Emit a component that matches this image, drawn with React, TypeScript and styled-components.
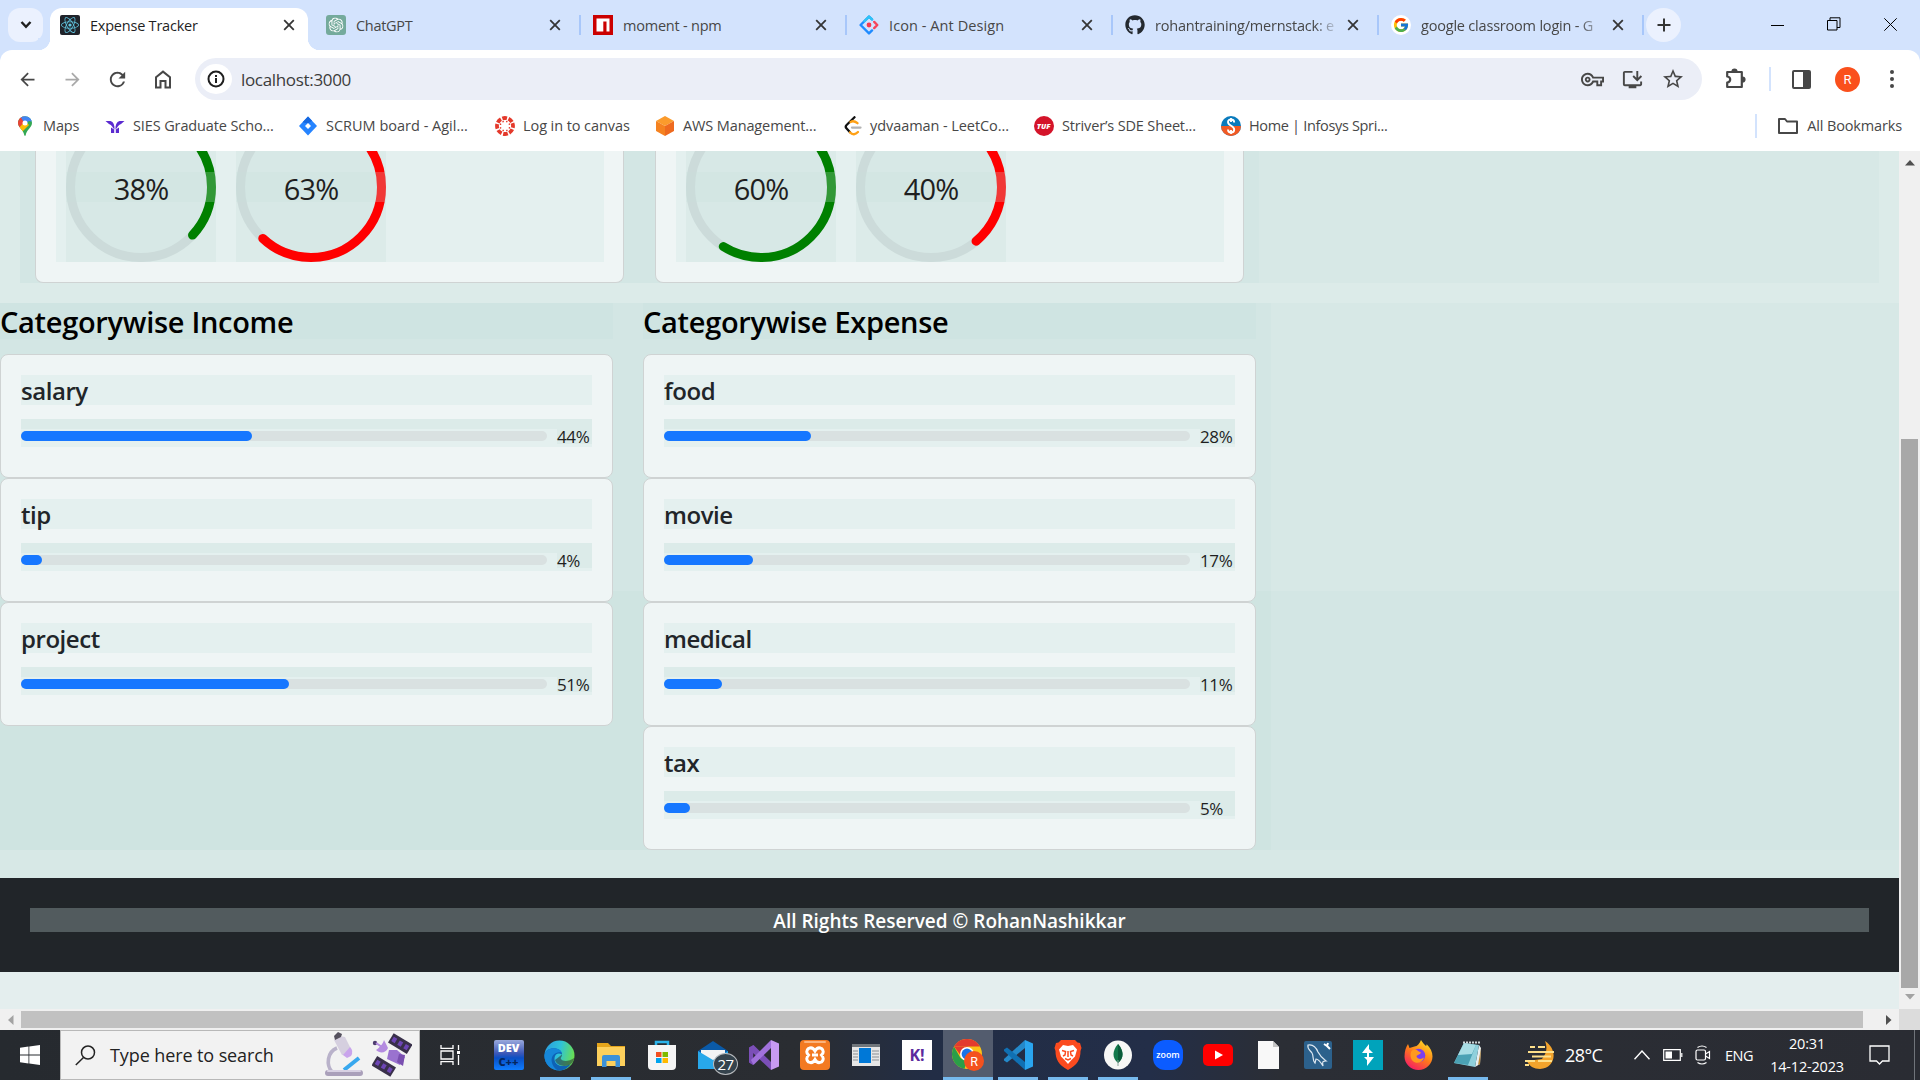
import React from 'react';
import styled, { createGlobalStyle } from 'styled-components';
import { FaGithub, FaReact, FaEdge, FaFirefoxBrowser } from 'react-icons/fa';
import { FcGoogle } from 'react-icons/fc';
import { SiOpenai } from 'react-icons/si';
import { MdOutlineVpnKey, MdInstallDesktop, MdStarBorder, MdArrowBack, MdArrowForward, MdRefresh } from 'react-icons/md';

const tint = {
  l1: '#eff5f5',
  l2: '#e4f0ef',
  l3: '#dcebe9',
  l4: '#d7e8e6',
  l5: '#d3e6e4',
  l6: '#cfe4e1',
};

const Global = createGlobalStyle`
  * { box-sizing: border-box; }
  body { margin: 0; overflow: hidden; font-family: 'Open Sans', 'Noto Sans', sans-serif; }
  svg { display: block; flex: none; }
`;

const Screen = styled.div`
  width: 1920px;
  height: 1080px;
  display: flex;
  flex-direction: column;
  overflow: hidden;
  background: #fff;
`;

/* ---------- browser chrome ---------- */

const TabStrip = styled.div`
  height: 50px;
  flex: none;
  display: flex;
  background: #d3e3fd;
  padding: 8px 0 0 8px;
`;

const RoundButton = styled.div<{ $round?: boolean }>`
  width: 35px;
  height: 34px;
  flex: none;
  border-radius: ${(p) => (p.$round ? '50%' : '12px')};
  background: #ebf1fe;
  display: flex;
  align-items: center;
  justify-content: center;
`;

const Tab = styled.div<{ $active?: boolean; $w: number; $sep?: boolean }>`
  position: relative;
  width: ${(p) => p.$w}px;
  height: 42px;
  flex: none;
  display: flex;
  align-items: center;
  padding: 0 9px 9px 10px;
  background: ${(p) => (p.$active ? '#fff' : 'transparent')};
  border-radius: 12px 12px 0 0;
  ${(p) =>
    p.$active &&
    `
    &::before, &::after {
      content: ''; position: absolute; bottom: 0; width: 12px; height: 12px;
    }
    &::before { left: -12px; background: radial-gradient(circle at 0 0, #d3e3fd 12px, #fff 12.5px); }
    &::after { right: -12px; background: radial-gradient(circle at 100% 0, #d3e3fd 12px, #fff 12.5px); }
  `}
  ${(p) =>
    p.$sep &&
    `
    &::after { content: ''; position: absolute; right: 2px; top: 7px; width: 2px; height: 20px; background: #a8c7fa; }
  `}
`;

const TabIcon = styled.div`
  width: 20px;
  height: 20px;
  margin-top: 1px;
  flex: none;
`;

const TabTitle = styled.div<{ $active?: boolean; $fade?: boolean; $ls?: number }>`
  flex: 1;
  margin: 1px 10px 0 10px;
  white-space: nowrap;
  font-size: 14.5px;
  letter-spacing: ${(p) => p.$ls ?? -0.22}px;
  color: ${(p) => (p.$active ? '#1f1f1f' : '#474747')};
  ${(p) => p.$fade && 'mask-image: linear-gradient(90deg, #000 88%, rgba(0, 0, 0, 0.15) 100%);'}
`;

const CloseSlot = styled.div<{ $wide?: boolean }>`
  flex: none;
  margin-right: ${(p) => (p.$wide ? 12 : 3)}px;
`;

const TabLead = styled.div<{ $w: number }>`
  width: ${(p) => p.$w}px;
  flex: none;
`;

const WindowControls = styled.div`
  flex: 1;
  height: 32px;
  display: flex;
  align-items: center;
  justify-content: flex-end;
  gap: 43px;
  padding-right: 23px;
`;

const Toolbar = styled.div`
  height: 58px;
  flex: none;
  background: #d3e3fd;
`;

const ToolbarInner = styled.div`
  height: 58px;
  display: flex;
  align-items: center;
  background: #fff;
  border-radius: 12px 12px 0 0;
  color: #474747;
`;

const ToolIcon = styled.div<{ $w: number; $c?: string }>`
  width: ${(p) => p.$w}px;
  flex: none;
  display: flex;
  justify-content: center;
  color: ${(p) => p.$c ?? '#474747'};
`;

const Omnibox = styled.div`
  width: 1507px;
  flex: none;
  height: 42px;
  border-radius: 21px;
  background: #ebeef7;
  display: flex;
  align-items: center;
  padding: 0 9px 0 5px;
`;

const InfoDisc = styled.div`
  width: 32px;
  height: 30px;
  border-radius: 50%;
  background: #fff;
  display: flex;
  align-items: center;
  justify-content: center;
`;

const Url = styled.div`
  flex: 1;
  margin-left: 9px;
  font-size: 17px;
  letter-spacing: -0.33px;
  color: #3c3c3c;
`;

const VRule = styled.div`
  width: 2px;
  height: 24px;
  flex: none;
  background: #d3e3fd;
`;

const Avatar = styled.div`
  width: 25px;
  height: 25px;
  border-radius: 50%;
  background: #fa501c;
  color: #fff;
  font: 13px Roboto, sans-serif;
  display: flex;
  align-items: center;
  justify-content: center;
`;

const Bookmarks = styled.div`
  height: 43px;
  flex: none;
  display: flex;
  align-items: center;
  padding: 0 18px 8px 15px;
  background: #fff;
`;

const Bookmark = styled.div<{ $w?: number }>`
  width: ${(p) => (p.$w ? `${p.$w}px` : 'auto')};
  flex: none;
  display: flex;
  align-items: center;
  gap: 8px;
  color: #474747;
`;

const BookmarkText = styled.span<{ $ls: number }>`
  font-size: 14.5px;
  line-height: 20px;
  letter-spacing: ${(p) => p.$ls}px;
  white-space: nowrap;
`;

const BookmarkEnd = styled.div`
  display: flex;
  align-items: center;
  gap: 20px;
`;

const Grow = styled.div`
  flex: 1;
`;

/* ---------- page ---------- */

const Viewport = styled.div`
  height: 858px;
  flex: none;
  display: flex;
`;

const Page = styled.div`
  width: 1899px;
  height: 858px;
  overflow: hidden;
  display: flex;
  flex-direction: column;
  background: ${tint.l3};
  color: #212529;
`;

const SummaryRow = styled.div`
  height: 132px;
  flex: none;
  margin: 0 20px 20px 20px;
  background: ${tint.l4};
`;

const SummaryCols = styled.div`
  width: 1239px;
  height: 132px;
  padding-left: 15px;
  display: flex;
  gap: 31px;
  background: ${tint.l5};
`;

const RingCard = styled.div`
  width: 589px;
  height: 132px;
  border: 1px solid #cfd3d3;
  border-top: 0;
  border-radius: 0 0 8px 8px;
  background: ${tint.l1};
  padding: 0 19px 0 20px;
`;

const RingBox = styled.div`
  height: 111px;
  overflow: hidden;
  background: ${tint.l2};
  display: flex;
  align-items: flex-end;
  gap: 20px;
  padding-left: 10px;
`;

const RingCell = styled.div`
  position: relative;
  width: 150px;
  height: 150px;
  flex: none;
  background: ${tint.l3};
`;

const RingLabel = styled.div`
  position: absolute;
  left: 0;
  right: 0;
  top: 60px;
  height: 30px;
  line-height: 33px;
  text-align: center;
  font-size: 29px;
  letter-spacing: -0.85px;
  color: #1f1f1f;
  background: rgba(200, 222, 220, 0.25);
`;

const Categories = styled.div`
  height: 547px;
  flex: none;
  display: flex;
  background: linear-gradient(${tint.l4} 288px, ${tint.l5} 288px);
`;

const CategoryCols = styled.div`
  width: 1271px;
  display: flex;
  gap: 30px;
  background: linear-gradient(${tint.l5} 288px, ${tint.l6} 288px);
`;

const Column = styled.div`
  width: 613px;
`;

const Heading = styled.h3`
  margin: 0 0 15px;
  height: 36px;
  line-height: 38px;
  font-size: 29px;
  font-weight: 600;
  letter-spacing: -0.3px;
  color: #000;
  background: #cfe4e2;
  white-space: nowrap;
`;

const CategoryCard = styled.div`
  height: 124px;
  border: 1px solid #cfd3d3;
  border-radius: 8px;
  background: ${tint.l1};
  padding: 20px;
`;

const CategoryName = styled.div`
  height: 30px;
  line-height: 31px;
  font-size: 24px;
  font-weight: 600;
  letter-spacing: -0.45px;
  background: ${tint.l2};
`;

const ProgressLine = styled.div`
  height: 28px;
  margin-top: 14px;
  background: linear-gradient(${tint.l3} 10px, ${tint.l2} 10px);
  display: flex;
  align-items: flex-start;
`;

const Track = styled.div`
  width: 526px;
  flex: none;
  height: 10px;
  margin-top: 12px;
  border-radius: 5px;
  background: #d9e1e1;
`;

const Fill = styled.div`
  height: 10px;
  border-radius: 5px;
  background: #1677ff;
`;

const Percent = styled.div`
  flex: 1;
  margin: 8px 0 0 10px;
  height: 17px;
  line-height: 19px;
  font-size: 17px;
  letter-spacing: -0.4px;
  color: #1f1f1f;
  white-space: nowrap;
  background: ${tint.l3};
`;

const MainGap = styled.div`
  height: 28px;
  flex: none;
  background: ${tint.l4};
`;

const Footer = styled.div`
  height: 94px;
  flex: none;
  padding: 30px 30px 0;
  background: #212529;
`;

const FooterText = styled.div`
  height: 24px;
  line-height: 26px;
  text-align: center;
  font-size: 19px;
  font-weight: 600;
  color: #fff;
  background: #525b5e;
`;

const PageEnd = styled.div`
  flex: 1;
  background: #e4eeee;
`;

const VScroll = styled.div`
  width: 21px;
  background: #f0f0f0;
  display: flex;
  flex-direction: column;
  align-items: center;
`;

const VThumb = styled.div`
  width: 17px;
  height: 549px;
  margin: 271px 0 6px;
  background: #a8a8a8;
`;

const HScroll = styled.div`
  height: 21px;
  flex: none;
  display: flex;
  align-items: center;
  background: #f0f0f0;
`;

const HThumb = styled.div`
  width: 1842px;
  height: 17px;
  background: #c1c1c1;
`;

const HArrow = styled.div<{ $w: number; $left: number }>`
  width: ${(p) => p.$w}px;
  padding-left: ${(p) => p.$left}px;
`;

const Corner = styled.div`
  width: 21px;
  height: 21px;
  background: #dcdcdc;
`;

/* ---------- taskbar ---------- */

const Taskbar = styled.div`
  height: 50px;
  flex: none;
  display: flex;
  align-items: center;
  background: linear-gradient(90deg, #262a2f 0, #2a2d32 800px, #222d45 930px, #232e48 1150px, #2b2e35 1280px, #2a2c33 100%);
  color: #fff;
`;

const StartCell = styled.div`
  width: 60px;
  flex: none;
  padding-left: 20px;
`;

const SearchBox = styled.div`
  width: 360px;
  flex: none;
  height: 50px;
  border: 1px solid #b8b8b8;
  background: #f2f2f2;
  display: flex;
  align-items: center;
  padding-left: 14px;
`;

const SearchText = styled.div`
  width: 228px;
  flex: none;
  padding-left: 14px;
  font-size: 18px;
  letter-spacing: -0.1px;
  color: #222;
  white-space: nowrap;
`;

const SearchArt = styled.div`
  display: flex;
  align-items: center;
  gap: 8px;
`;

const TaskView = styled.div`
  width: 63px;
  flex: none;
  padding-left: 20px;
`;

const AppCell = styled.div<{ $w: number; $active?: boolean; $line?: number }>`
  position: relative;
  width: ${(p) => p.$w}px;
  height: 50px;
  flex: none;
  display: flex;
  align-items: center;
  justify-content: center;
  background: ${(p) => (p.$active ? '#535c6e' : 'transparent')};
  &::after {
    content: '';
    position: absolute;
    bottom: 0;
    left: 50%;
    height: 3px;
    width: ${(p) => p.$line ?? 0}px;
    transform: translateX(-50%);
    background: #76b9ed;
  }
`;

const MailBadge = styled.div`
  position: absolute;
  left: 26px;
  top: 23px;
  width: 25px;
  height: 22px;
  border-radius: 50%;
  border: 1px solid #b9bcbf;
  background: #35434d;
  font-size: 15px;
  line-height: 20px;
  text-align: center;
  letter-spacing: -0.6px;
`;

const Tile = styled.div<{ $bg: string; $c: string; $size: number; $r?: number }>`
  width: 30px;
  height: 30px;
  border-radius: ${(p) => p.$r ?? 0}px;
  background: ${(p) => p.$bg};
  color: ${(p) => p.$c};
  font-size: ${(p) => p.$size}px;
  font-weight: 700;
  line-height: 1;
  display: flex;
  flex-direction: column;
  align-items: center;
  justify-content: center;
`;

const TileLine = styled.div<{ $c: string }>`
  height: 14px;
  line-height: 14px;
  font-size: 11px;
  font-weight: 800;
  color: ${(p) => p.$c};
`;

const Tray = styled.div`
  flex: 1;
  height: 50px;
  display: flex;
  align-items: center;
  padding-left: 32px;
`;

const TrayItem = styled.div<{ $w: number }>`
  width: ${(p) => p.$w}px;
  flex: none;
  white-space: nowrap;
`;

const Temp = styled(TrayItem)`
  font-size: 18px;
  letter-spacing: -0.6px;
`;

const Lang = styled(TrayItem)`
  font-size: 14.5px;
  letter-spacing: -0.5px;
`;

const Clock = styled(TrayItem)`
  font-size: 14.5px;
  letter-spacing: -0.2px;
  line-height: 23px;
  text-align: center;
`;

const NotifySvg = styled.svg`
  margin-left: 24px;
`;

const ShowDesktop = styled.div`
  width: 1px;
  height: 50px;
  background: #70747a;
`;

/* ---------- drawings ---------- */

const Cross = () => (
  <svg width="14" height="14" viewBox="0 0 14 14" stroke="#353535" strokeWidth="1.8">
    <path d="M2.2 2.2l9.6 9.6M11.8 2.2L2.2 11.8" />
  </svg>
);

const ReactFav = () => (
  <svg width="20" height="20" viewBox="0 0 20 20">
    <rect width="20" height="20" rx="2" fill="#20232a" />
    <FaReact x="1" y="1" size={18} color="#61c5e0" />
  </svg>
);
const GptFav = () => (
  <svg width="20" height="20" viewBox="0 0 20 20">
    <rect width="20" height="20" rx="3" fill="#74aa9c" />
    <SiOpenai x="2.5" y="2.5" size={15} color="#fff" />
  </svg>
);
const NpmFav = () => (
  <svg width="20" height="20" viewBox="0 0 20 20">
    <rect width="20" height="20" fill="#cb0000" />
    <path d="M3.5 3.5h13v13h-3v-10h-3.2v10H3.5z" fill="#fff" />
  </svg>
);
const AntFav = () => (
  <svg width="20" height="20" viewBox="0 0 20 20" fill="none" strokeWidth="2.4" strokeLinecap="round" strokeLinejoin="round">
    <path d="M13 4.4L10 1.6 1.6 10l8.4 8.4 3-3" stroke="#1f8bff" />
    <path d="M13 4.4L10 1.6 5.5 6.1" stroke="#2fc3f5" />
    <path d="M15.2 6.9L18.3 10l-3.1 3.1" stroke="#f5455c" />
    <circle cx="10" cy="10" r="2.4" fill="#f5374f" />
  </svg>
);
const GoogleFav = () => (
  <svg width="20" height="20" viewBox="0 0 20 20">
    <circle cx="10" cy="10" r="10" fill="#fff" />
    <FcGoogle x="1.5" y="1.5" size={17} />
  </svg>
);

const MapsIcon = () => (
  <svg width="20" height="20" viewBox="0 0 20 20">
    <clipPath id="pin">
      <path d="M10 0.3c-4 0-7 3-7 6.8 0 4.6 5.4 6.5 6.3 12.1.2.8 1.2.8 1.4 0C11.6 13.6 17 11.7 17 7.1 17 3.3 14 .3 10 .3z" />
    </clipPath>
    <g clipPath="url(#pin)">
      <rect width="20" height="20" fill="#34a853" />
      <path d="M0 0h8.5L10 7 3 13H0z" fill="#ea4335" />
      <path d="M5 0h15v6l-6-1-4 3z" fill="#4285f4" />
      <path d="M4 12l6-7 4 4-8 8z" fill="#fbbc04" />
    </g>
    <circle cx="10" cy="7" r="2.5" fill="#fff" />
  </svg>
);
const SiesIcon = () => (
  <svg width="20" height="20" viewBox="0 0 20 20" fill="#5b2bd0">
    <path d="M.5 5h5c3 1 4.300 4 4 8.500-1.800-1.500-2.500-4.500-5.500-5.500z" />
    <path d="M19.500 5h-5c-3 1-4.300 4-4 8.500 1.800-1.500 2.500-4.500 5.500-5.500z" />
    <path d="M6 11.500l3.200 2V17H6zM14 11.500l-3.200 2V17H14z" />
  </svg>
);
const JiraIcon = () => (
  <svg width="20" height="20" viewBox="0 0 20 20">
    <path d="M10 .5l9 9.5-9 9.5L1 10z" fill="#2684ff" />
    <path d="M10 .5l4 4.3-4 2.7-5.5-1.2z" fill="#1668e0" />
    <path d="M10 7l3 3-3 3-3-3z" fill="#fff" />
  </svg>
);
const CanvasIcon = () => (
  <svg width="20" height="20" viewBox="0 0 20 20">
    <circle cx="10" cy="10" r="8" fill="none" stroke="#e4392b" strokeWidth="3.8" strokeDasharray="4.7 1.583" transform="rotate(-21 10 10)" />
    {[0, 45, 90, 135, 180, 225, 270, 315].map((a) => (
      <circle key={a} cx="10" cy="5.2" r=".8" fill="#e4392b" transform={`rotate(${a + 22} 10 10)`} />
    ))}
  </svg>
);
const AwsIcon = () => (
  <svg width="20" height="20" viewBox="0 0 20 20">
    <path d="M10 0l9 5-9 5-9-5z" fill="#fb9b2c" />
    <path d="M1 5l9 5v10l-9-5z" fill="#f58220" />
    <path d="M19 5l-9 5v10l9-5z" fill="#ee6a1f" />
  </svg>
);
const LeetIcon = () => (
  <svg width="18" height="20" viewBox="0 0 18 20" fill="none" strokeLinecap="round" strokeWidth="2.3">
    <path d="M10.5 1.2L2.6 9c-1 1-1 2.300-.2 3.200l3.600 4" stroke="#111" />
    <path d="M6 16.300c2.500 3 5.500 2.300 8-.3M6.500 6c2-1.200 4.500-.8 7 1.200" stroke="#ffa116" />
    <path d="M8 11.600h8.500" stroke="#b3b3b3" />
  </svg>
);
const TufIcon = () => (
  <svg width="20" height="20" viewBox="0 0 20 20">
    <circle cx="10" cy="10" r="10" fill="#d4142a" />
    <text x="9.700" y="12.700" fontSize="7.500" fontWeight="800" fontStyle="italic" textAnchor="middle" fill="#fff">TUF</text>
  </svg>
);
const InfosysIcon = () => (
  <svg width="20" height="20" viewBox="0 0 20 20">
    <circle cx="10" cy="10" r="10" fill="#0a7bbd" />
    <path d="M0 10h20a10 10 0 0 1-20 0z" fill="#f15a24" />
    <path d="M13.200 6.500c0-4-6.200-4-6.200-.5 0 4 6.200 3.500 6.200 7.500 0 4-6.200 4-6.200 0M10 2v4M10 14v4" stroke="#fff" strokeWidth="1.900" fill="none" />
  </svg>
);
const FolderIcon = () => (
  <svg width="22" height="18" viewBox="0 0 22 18" fill="none" stroke="#474747" strokeWidth="2">
    <path d="M2 2h6l2 2.500h10V16H2z" strokeLinejoin="round" />
  </svg>
);

const Ring = ({ value, color }: { value: number; color: string }) => {
  const r = 70.5;
  const len = 2 * Math.PI * r;
  return (
    <svg width="150" height="150" viewBox="0 0 150 150" fill="none" strokeWidth="9">
      <circle cx="75" cy="75" r="75" fill={tint.l4} />
      <circle cx="75" cy="75" r={r} stroke="#ccdbda" />
      <circle
        cx="75"
        cy="75"
        r={r}
        stroke={color}
        strokeLinecap="round"
        strokeDasharray={`${((value - 1.1) / 100) * len} ${len}`}
        transform="rotate(-90 75 75)"
      />
    </svg>
  );
};

const Microscope = () => (
  <svg width="40" height="48" viewBox="0 0 40 48">
    <path d="M13 17C3 21 2 34 8 41h22" stroke="#b9b2ca" strokeWidth="3.600" fill="none" />
    <path d="M10 9q6-5 11-3l7 14q-3 5-10 4z" fill="#d5cfdf" />
    <path d="M19 24l7-8q4 4 1 9l-4 2z" fill="#c9a4ec" />
    <path d="M10 5l4-4 4 2-1 3-6 3z" fill="#55515e" />
    <path d="M20 39L35 27" stroke="#38a8ee" strokeWidth="4" />
    <rect x="1" y="39" width="38" height="6" rx="3" fill="#aaa0ba" />
    <rect x="3" y="39" width="34" height="2" rx="1" fill="#d8d1e3" />
  </svg>
);
const Satellite = () => (
  <svg width="40" height="44" viewBox="0 0 40 44">
    <g transform="rotate(31 28 11)">
      <rect x="17" y="5" width="22" height="11" fill="#39304a" />
      <path d="M19 8h4v5h-4zM26 8h4v5h-4zM33 8h4v5h-4z" fill="#6d45b5" />
    </g>
    <g transform="rotate(31 12 33)">
      <rect x="1" y="28" width="22" height="11" fill="#39304a" />
      <path d="M3 31h4v5H3zM10 31h4v5h-4zM17 31h4v5h-4z" fill="#6d45b5" />
    </g>
    <path d="M17 17l8 0 8 7-5 8-13-6z" fill="#9a72cf" />
    <path d="M27 21l6 1-2 11-6-4z" fill="#7a4fb0" />
    <path d="M12 7c-1 4-5 8-8 10 4 4 10 3 12-2z" fill="#b48be0" />
    <circle cx="3" cy="10" r="2.200" fill="#4d3c6e" />
    <path d="M4 10l6 4" stroke="#b48be0" strokeWidth="2" />
  </svg>
);

const EdgeIcon = () => (
  <svg width="31" height="31" viewBox="0 0 31 31">
    <circle cx="15.500" cy="15.500" r="15" fill="url(#edge)" />
    <path d="M.5 16C1 9 8 7.500 12 8.500c4 .8 6 3.500 6 6-3-2-7-1-7.500 3.500-.5 6 5 9.500 12.500 7.500l3.500-1.300C23 29 19 30.500 15.500 30.500 7 30.500.5 24 .5 16z" fill="#0e62b5" />
    <path d="M.5 16C1 9 8 7.500 12 8.500c3 .6 5 2.200 5.700 4-5-1.500-11 2-10 9 .5 4 3 7 6 8.900C6 29.500.5 23.500.5 16z" fill="#1687d9" />
    <path d="M18 14.500c.5 2-2 3-.8 4.800 1.800 2.400 8 2.200 13-1.300-.6 3-2 5-3.700 6.200-6 3.500-14 1.300-15.500-4.200" fill="#2a2d32" opacity=".55" />
  </svg>
);
const ExplorerIcon = () => (
  <svg width="28" height="26" viewBox="0 0 28 26">
    <path d="M0 1h11l3 3h14v6H0z" fill="#e5a51b" />
    <path d="M0 5h28v19H0z" fill="#fdd05c" />
    <path d="M5 25V15q0-2 2-2h14q2 0 2 2v10h-4.500v-6h-9v6z" fill="#3c91d8" />
  </svg>
);
const StoreIcon = () => (
  <svg width="30" height="30" viewBox="0 0 30 30">
    <path d="M9 7V2h12v5" stroke="#2bb3ea" strokeWidth="2.500" fill="none" />
    <path d="M1 5h28v21q0 4-4 4H5q-4 0-4-4z" fill="#f5f5f5" />
    <path d="M9 12h5.500v5H9z" fill="#f25022" />
    <path d="M15.500 12H21v5h-5.500z" fill="#7fba00" />
    <path d="M9 18h5.500v5H9z" fill="#00a4ef" />
    <path d="M15.500 18H21v5h-5.500z" fill="#ffb900" />
  </svg>
);
const MailIcon = () => (
  <svg width="30" height="28" viewBox="0 0 30 28">
    <path d="M0 10L15 0l15 10v18H0z" fill="#0a5aa8" />
    <path d="M3 9h24v8l-12 6-12-6z" fill="#f4f4f4" />
    <path d="M0 10l15 9 15-9v18H0z" fill="#28a8ea" />
  </svg>
);
const VsIcon = () => (
  <svg width="30" height="30" viewBox="0 0 30 30">
    <path d="M0 7.500L4.500 5v20L0 22.500z" fill="#52307f" />
    <path d="M0 7.500L4.500 5 22 22v8L4 13v12l-4-2.500z" fill="#7b4fb8" />
    <path d="M22 0v8L4.500 25 2 20z" fill="#a172dc" />
    <path d="M22 0l8 3.500v23L22 30z" fill="#c79af2" />
  </svg>
);
const XamppIcon = () => (
  <svg width="30" height="30" viewBox="0 0 30 30">
    <rect width="30" height="30" rx="4" fill="#f37a22" />
    <rect x="4" y="1" width="22" height="2" rx="1" fill="#fbb37c" />
    <path d="M8.500 8.500q4-2 6.500 2.500 2.500-4.500 6.500-2.500 3.500 3 0 6.500 3.500 4 0 7-4 2-6.500-2.500-2.500 4.500-6.500 2.500-3.500-3 0-7-3.500-3.500 0-6.500z" fill="none" stroke="#fff" strokeWidth="3" />
    <path d="M12 15h6" stroke="#fff" strokeWidth="3" />
  </svg>
);
const WindowIcon = () => (
  <svg width="28" height="22" viewBox="0 0 28 22">
    <rect width="28" height="22" fill="#e6e6e6" />
    <rect width="28" height="3" fill="#70767c" />
    <rect x="7" y="4" width="12" height="15" fill="#0078d7" />
    <path d="M1 7h5M1 10h5M1 13h5M1 16h5M20 7h7M20 10h7M20 13h7M20 16h7" stroke="#8a8f94" />
  </svg>
);
const ChromeIcon = () => (
  <svg width="32" height="32" viewBox="0 0 32 32">
    <circle cx="15" cy="15" r="15" fill="#fbc116" />
    <path d="M2 7.500A15 15 0 0 1 28 7.500H15z" fill="#e33b2e" />
    <path d="M2 7.500L8.500 19 15 22l-2.500 7.800A15 15 0 0 1 2 7.500z" fill="#2a9e48" />
    <path d="M2 7.500h14l-8 8z" fill="#e33b2e" />
    <circle cx="15" cy="15" r="7" fill="#fff" />
    <circle cx="15" cy="15" r="5.400" fill="#1a73e8" />
    <circle cx="22" cy="22" r="10" fill="#f4511e" />
    <text x="22" y="26.500" fontSize="12.500" fontFamily="Roboto, sans-serif" textAnchor="middle" fill="#fff">R</text>
  </svg>
);
const CodeIcon = () => (
  <svg width="30" height="30" viewBox="0 0 30 30">
    <path d="M22 0v8L4 22.500 1 20.500V19z" fill="#2489ca" />
    <path d="M22 30v-8L4 7.500 1 9.500V11z" fill="#1070b3" />
    <path d="M22 0l8 3.500v23L22 30z" fill="#2aa5ee" />
  </svg>
);
const BraveIcon = () => (
  <svg width="28" height="30" viewBox="0 0 28 30">
    <path d="M7 0h14l2.500 2.500L26 3l1.500 5-1 3c0 8-3 14-12.500 19C4.500 25 1.500 19 1.500 11L.5 8 2 3l2.500-.5z" fill="#fb4b1f" />
    <path d="M9 5l5 1 5-1 4 4.500-2 7-4 4-3 3.500-3-3.500-4-4-2-7z" fill="#fff" />
    <path d="M8 10.500l3.500 1L11 15l-2 1M20 10.500l-3.500 1 .5 3.500 2 1M11 18.500l3 1.500 3-1.500M14 11v6" stroke="#fb4b1f" strokeWidth="1.500" fill="none" />
  </svg>
);
const MongoIcon = () => (
  <svg width="28" height="30" viewBox="0 0 28 30">
    <ellipse cx="14" cy="15" rx="14" ry="14.500" fill="#f7f7f5" />
    <path d="M14 4c6 7 6 14 0 19-6-5-6-12 0-19z" fill="#13794b" />
    <path d="M14 4c6 7 6 14 0 19z" fill="#0b5c3a" />
    <path d="M14 20v6" stroke="#8aa39a" />
  </svg>
);
const ZoomIcon = () => (
  <svg width="30" height="30" viewBox="0 0 30 30">
    <rect width="30" height="30" rx="12" fill="#0b5cff" />
    <text x="15" y="17.800" fontSize="8.800" fontWeight="600" textAnchor="middle" fill="#fff">zoom</text>
  </svg>
);
const YoutubeIcon = () => (
  <svg width="30" height="22" viewBox="0 0 30 22">
    <rect width="30" height="22" rx="5" fill="#f00" />
    <path d="M12 6.500l8 4.500-8 4.500z" fill="#fff" />
  </svg>
);
const DocIcon = () => (
  <svg width="21" height="28" viewBox="0 0 21 28">
    <path d="M0 0h15l6 6v22H0z" fill="#f8f8f8" />
    <path d="M15 0v6h6z" fill="#c4c4c4" />
  </svg>
);
const MysqlIcon = () => (
  <svg width="30" height="30" viewBox="0 0 30 30" fill="none">
    <rect x="1" y="1" width="28" height="28" rx="2" fill="#2c618c" />
    <path d="M5 5c5-1 8 2 10 7 2 4 4 6 8 9-3 0-4 0-3 5-3-5-5-7-7-7l-1 4c-3-3-1-7-3-10S4 9 5 5z" stroke="#dfe9f2" strokeWidth="1.200" />
    <path d="M21 4l3 2 1-3M24 6l3 3" stroke="#fff" strokeWidth="2" />
  </svg>
);
const BoltIcon = () => (
  <svg width="30" height="30" viewBox="0 0 30 30">
    <rect width="30" height="30" fill="#00a3bb" />
    <path d="M16 4l-7 9h5v4h-3l3 3v6l7-9h-5v-4h4l-4-4z" fill="#fff" />
  </svg>
);
const FirefoxIcon = () => (
  <svg width="29" height="30" viewBox="0 0 29 30">
    <path d="M17 0c2 3 3 4 5 6 1-1 .5-2 .5-2 4 4 6 8 6 12.500C28.500 24 22 30 14.500 30S.5 24 .5 16.500C.5 11 2 7 4 4l1.500 4 5-1.500c3 0 5-3 6.500-6.500z" fill="url(#fire)" />
    <circle cx="14.500" cy="15.500" r="6.800" fill="#7a3ff0" />
    <path d="M7 12c2-3 5-3 7-1l3 1.500c-1 2.500-4 2-4.500 4 1 3 5 3 7.500 1-1 4-5 6-8.500 5-4-1-6-6-4.500-10.500z" fill="#ff9a1f" />
  </svg>
);
const NotepadIcon = () => (
  <svg width="28" height="28" viewBox="0 0 28 28">
    <path d="M25 4l2 3-1 16-5 3z" fill="#e8eef0" />
    <path d="M27 7l-1 16-2 1z" fill="#b98a3a" />
    <path d="M10 2l15 2-4 22L0 22z" fill="#8fd0dc" />
    <path d="M10 2l12 2-8 20L0 22z" fill="#4ba1b4" />
    <path d="M10 2l12 2-4 9-14 1z" fill="#a9dde5" />
    <path d="M9 1.500h17" stroke="#cfd6d8" strokeWidth="2" strokeDasharray="2 1" />
  </svg>
);
const WeatherIcon = () => (
  <svg width="30" height="28" viewBox="0 0 30 28">
    <path d="M20 0c14 9 10 28-5 28C9 28 4 25 2 20l15-2c4-5 6-10 3-18z" fill="#f3a32c" />
    <path d="M5 6h5M13 6h7M3 11h26M7 15.500h19M0 20h10M13 20h14M0 24h4" stroke="#ffe08a" strokeWidth="2.200" />
  </svg>
);

/* ---------- data ---------- */

const tabs = [
  { title: 'Expense Tracker', icon: <ReactFav />, active: true, w: 258 },
  { title: 'ChatGPT', icon: <GptFav />, sep: true, w: 267, first: true, ls: -0.3 },
  { title: 'moment - npm', icon: <NpmFav />, sep: true, w: 266 },
  { title: 'Icon - Ant Design', icon: <AntFav />, sep: true, w: 266, ls: 0.08 },
  { title: 'rohantraining/mernstack: e', icon: <FaGithub size={20} color="#24292f" />, sep: true, w: 266, fade: true },
  { title: 'google classroom login - G', icon: <GoogleFav />, sep: true, w: 265, fade: true, ls: -0.2 },
];

const bookmarks = [
  { text: 'Maps', icon: <MapsIcon />, w: 90, ls: -0.15 },
  { text: 'SIES Graduate Scho...', icon: <SiesIcon />, w: 193, ls: -0.12 },
  { text: 'SCRUM board - Agil...', icon: <JiraIcon />, w: 197, ls: 0 },
  { text: 'Log in to canvas', icon: <CanvasIcon />, w: 160, ls: -0.08 },
  { text: 'AWS Management...', icon: <AwsIcon />, w: 189, ls: -0.12 },
  { text: 'ydvaaman - LeetCo...', icon: <LeetIcon />, w: 190, ls: -0.07 },
  { text: 'Striver’s SDE Sheet...', icon: <TufIcon />, w: 187, ls: -0.15 },
  { text: 'Home | Infosys Spri...', icon: <InfosysIcon />, w: 180, ls: -0.33 },
];

const rings = [
  [
    { value: 38, color: 'green' },
    { value: 63, color: 'red' },
  ],
  [
    { value: 60, color: 'green' },
    { value: 40, color: 'red' },
  ],
];

const categories = [
  { heading: 'Categorywise Income', items: [['salary', 44], ['tip', 4], ['project', 51]] as [string, number][] },
  { heading: 'Categorywise Expense', items: [['food', 28], ['movie', 17], ['medical', 11], ['tax', 5]] as [string, number][] },
];

const DevTile = () => (
  <Tile $bg="linear-gradient(#9aa9dc 0, #3b57b8 45%, #0a4fc4 60%, #0f7dff 100%)" $c="#fff" $size={11} $r={2}>
    <TileLine $c="#fff">DEV</TileLine>
    <TileLine $c="#05265e">C++</TileLine>
  </Tile>
);

const apps: { icon: React.ReactNode; w: number; line?: number; active?: boolean }[] = [
  { icon: <DevTile />, w: 51 },
  { icon: <EdgeIcon />, w: 51, line: 40 },
  { icon: <ExplorerIcon />, w: 51, line: 40 },
  { icon: <StoreIcon />, w: 51 },
  { icon: <><MailIcon /><MailBadge>27</MailBadge></>, w: 51 },
  { icon: <VsIcon />, w: 51 },
  { icon: <XamppIcon />, w: 51 },
  { icon: <WindowIcon />, w: 51 },
  { icon: <Tile $bg="#fff" $c="#5b2a9d" $size={16}>K!</Tile>, w: 52 },
  { icon: <ChromeIcon />, w: 50, line: 50, active: true },
  { icon: <CodeIcon />, w: 50, line: 40 },
  { icon: <BraveIcon />, w: 50, line: 40 },
  { icon: <MongoIcon />, w: 50, line: 40 },
  { icon: <ZoomIcon />, w: 50 },
  { icon: <YoutubeIcon />, w: 50 },
  { icon: <DocIcon />, w: 50 },
  { icon: <MysqlIcon />, w: 50 },
  { icon: <BoltIcon />, w: 50 },
  { icon: <FirefoxIcon />, w: 50 },
  { icon: <NotepadIcon />, w: 50, line: 40 },
];

const Gradients = () => (
  <svg width="0" height="0" style={{ position: 'absolute' }}>
    <linearGradient id="edge" x1="0" y1="0.3" x2="1" y2="0.5">
      <stop offset="0" stopColor="#2a9fe0" />
      <stop offset=".5" stopColor="#2fc3d8" />
      <stop offset="1" stopColor="#6be04c" />
    </linearGradient>
    <linearGradient id="fire" x1="0.2" y1="1" x2="0.8" y2="0">
      <stop offset="0" stopColor="#f5156c" />
      <stop offset=".5" stopColor="#ff7a1a" />
      <stop offset="1" stopColor="#ffe226" />
    </linearGradient>
  </svg>
);

const Tabs = () => (
  <>
    <TabLead $w={7} />
    {tabs.map((t) => (
      <React.Fragment key={t.title}>
        {t.first && <TabLead $w={8} />}
        <Tab $w={t.w} $active={t.active} $sep={t.sep}>
          <TabIcon>{t.icon}</TabIcon>
          <TabTitle $active={t.active} $fade={t.fade} $ls={t.ls}>{t.title}</TabTitle>
          <CloseSlot $wide={!t.active}><Cross /></CloseSlot>
        </Tab>
      </React.Fragment>
    ))}
  </>
);

export default function App() {
  return (
    <Screen>
      <Global />
      <Gradients />

      <TabStrip>
        <RoundButton>
          <svg width="14" height="10" viewBox="0 0 14 10" fill="none" stroke="#1f1f1f" strokeWidth="2.400">
            <path d="M2.500 2L7 6.800 11.500 2" />
          </svg>
        </RoundButton>
        <Tabs />
        <RoundButton $round>
          <svg width="14" height="14" viewBox="0 0 14 14" stroke="#353535" strokeWidth="2">
            <path d="M7 .5v13M.5 7h13" />
          </svg>
        </RoundButton>
        <WindowControls>
          <svg width="13" height="13" viewBox="0 0 13 13" stroke="#000"><path d="M0 7.500h13" /></svg>
          <svg width="14" height="14" viewBox="0 0 14 14" fill="none" stroke="#000">
            <path d="M.5 3.500h9.500v9.500H.5zM3 3.500V.8h10v9.700h-3" />
          </svg>
          <svg width="13" height="13" viewBox="0 0 13 13" stroke="#000"><path d="M.3.3l12.400 12.400M12.700.3L.3 12.700" /></svg>
        </WindowControls>
      </TabStrip>

      <Toolbar>
        <ToolbarInner>
          <ToolIcon $w={55}><MdArrowBack size={21} /></ToolIcon>
          <ToolIcon $w={34} $c="#a9a9a9"><MdArrowForward size={21} /></ToolIcon>
          <ToolIcon $w={57}><MdRefresh size={23} /></ToolIcon>
          <ToolIcon $w={33}>
            <svg width="18" height="19" viewBox="0 0 18 19" fill="none" stroke="#474747" strokeWidth="2">
              <path d="M2 7.200L9 1.600l7 5.600V17.500h-4.500V11h-5v6.500H2z" />
            </svg>
          </ToolIcon>
          <ToolIcon $w={16} />
          <Omnibox>
            <InfoDisc>
              <svg width="18" height="18" viewBox="0 0 18 18" fill="none" stroke="#1f1f1f" strokeWidth="2">
                <circle cx="9" cy="9" r="7.500" />
                <path d="M9 8v5M9 5v2" />
              </svg>
            </InfoDisc>
            <Url>localhost:3000</Url>
            <ToolIcon $w={40}><MdOutlineVpnKey size={23} /></ToolIcon>
            <ToolIcon $w={40}><MdInstallDesktop size={23} /></ToolIcon>
            <ToolIcon $w={41}><MdStarBorder size={24} /></ToolIcon>
          </Omnibox>
          <ToolIcon $w={67}>
            <svg width="22" height="22" viewBox="0 0 22 22" fill="none" stroke="#474747" strokeWidth="2.200" strokeLinejoin="round">
              <path d="M2.200 4h14.600v15H2.200v-4.500q3-.4 3-3t-3-3z" />
              <path d="M7.500 3.500a2 2 0 0 1 4 0zM17.500 9.500a2 2 0 0 1 0 4z" fill="#474747" />
            </svg>
          </ToolIcon>
          <VRule />
          <ToolIcon $w={61}>
            <svg width="19" height="19" viewBox="0 0 19 19">
              <rect x="1" y="1" width="17" height="17" rx="1" fill="none" stroke="#474747" strokeWidth="2" />
              <rect x="11" y="1" width="7" height="17" fill="#474747" />
            </svg>
          </ToolIcon>
          <ToolIcon $w={31}><Avatar>R</Avatar></ToolIcon>
          <ToolIcon $w={57}>
            <svg width="4" height="18" viewBox="0 0 4 18" fill="#474747">
              <circle cx="2" cy="2" r="2" /><circle cx="2" cy="9" r="2" /><circle cx="2" cy="16" r="2" />
            </svg>
          </ToolIcon>
        </ToolbarInner>
      </Toolbar>

      <Bookmarks>
        {bookmarks.map((b) => (
          <Bookmark key={b.text} $w={b.w}>
            {b.icon}
            <BookmarkText $ls={b.ls}>{b.text}</BookmarkText>
          </Bookmark>
        ))}
        <Grow />
        <BookmarkEnd>
          <VRule />
          <Bookmark>
            <FolderIcon />
            <BookmarkText $ls={-0.15}>All Bookmarks</BookmarkText>
          </Bookmark>
        </BookmarkEnd>
      </Bookmarks>

      <Viewport>
        <Page>
          <SummaryRow>
            <SummaryCols>
              {rings.map((pair, i) => (
                <RingCard key={i}>
                  <RingBox>
                    {pair.map((r) => (
                      <RingCell key={r.value}>
                        <Ring value={r.value} color={r.color} />
                        <RingLabel>{r.value}%</RingLabel>
                      </RingCell>
                    ))}
                  </RingBox>
                </RingCard>
              ))}
            </SummaryCols>
          </SummaryRow>
          <Categories>
            <CategoryCols>
              {categories.map((c) => (
                <Column key={c.heading}>
                  <Heading>{c.heading}</Heading>
                  {c.items.map(([name, pct]) => (
                    <CategoryCard key={name}>
                      <CategoryName>{name}</CategoryName>
                      <ProgressLine>
                        <Track><Fill style={{ width: `${pct}%` }} /></Track>
                        <Percent>{pct}%</Percent>
                      </ProgressLine>
                    </CategoryCard>
                  ))}
                </Column>
              ))}
            </CategoryCols>
          </Categories>
          <MainGap />
          <Footer><FooterText>All Rights Reserved © RohanNashikkar</FooterText></Footer>
          <PageEnd />
        </Page>
        <VScroll>
          <svg width="10" height="17" viewBox="0 0 10 17"><path d="M0 14.500h10L5 9z" fill="#505050" /></svg>
          <VThumb />
          <svg width="10" height="6" viewBox="0 0 10 6"><path d="M0 0h10L5 5.500z" fill="#a3a3a3" /></svg>
        </VScroll>
      </Viewport>

      <HScroll>
        <HArrow $w={21} $left={8}>
          <svg width="6" height="10" viewBox="0 0 6 10"><path d="M5.500 0v10L0 5z" fill="#a3a3a3" /></svg>
        </HArrow>
        <HThumb />
        <HArrow $w={36} $left={23}>
          <svg width="6" height="10" viewBox="0 0 6 10"><path d="M0 0v10L5.500 5z" fill="#505050" /></svg>
        </HArrow>
        <Corner />
      </HScroll>

      <Taskbar>
        <StartCell>
          <svg width="20" height="20" viewBox="0 0 20 20" fill="#fff">
            <path d="M0 2.800L8.500 1.600v8H0zM9.300 1.500L20 0v9.600H9.300zM0 10.400h8.500v8L0 17.200zM9.300 10.400H20V20L9.300 18.500z" />
          </svg>
        </StartCell>
        <SearchBox>
          <svg width="21" height="21" viewBox="0 0 21 21" fill="none" stroke="#222" strokeWidth="1.500">
            <circle cx="13" cy="7.500" r="6.500" />
            <path d="M8.500 12.500L.8 20" />
          </svg>
          <SearchText>Type here to search</SearchText>
          <SearchArt><Microscope /><Satellite /></SearchArt>
        </SearchBox>
        <TaskView>
          <svg width="21" height="20" viewBox="0 0 21 20" fill="none" stroke="#fff" strokeWidth="1.300">
            <path d="M1 0v3.300h12V0M1 20v-3.300h12V20M1 6h12v8H1zM18.500 0v5M18.500 10v10" />
            <path d="M17 7.500h3" strokeWidth="3" />
          </svg>
        </TaskView>
        {apps.map((a, i) => (
          <AppCell key={i} $w={a.w} $line={a.line} $active={a.active}>{a.icon}</AppCell>
        ))}
        <Tray>
          <TrayItem $w={40}><WeatherIcon /></TrayItem>
          <Temp $w={69}>28°C</Temp>
          <TrayItem $w={29}>
            <svg width="16" height="10" viewBox="0 0 16 10" fill="none" stroke="#fff" strokeWidth="1.400"><path d="M.5 9.200L8 1l7.500 8.200" /></svg>
          </TrayItem>
          <TrayItem $w={32}>
            <svg width="20" height="12" viewBox="0 0 20 12" fill="none" stroke="#fff" strokeWidth="1.200">
              <path d="M.7.7h16.600v10.600H.7zM18.800 4v4" /><rect x="2.500" y="2.500" width="6.500" height="7" fill="#fff" stroke="none" />
            </svg>
          </TrayItem>
          <TrayItem $w={30}>
            <svg width="16" height="20" viewBox="0 0 16 20" fill="none" stroke="#fff" strokeWidth="1.200">
              <rect x="1" y="5" width="9.500" height="10" rx="1.500" /><path d="M10.500 9l4-2.500v7l-4-2.500M2.500 2.500q4.500-3 9 0M2.500 17.500q4.500 3 9 0" />
            </svg>
          </TrayItem>
          <Lang $w={44}>ENG</Lang>
          <Clock $w={76}>20:31<br />14-12-2023</Clock>
          <TrayItem $w={69}>
            <NotifySvg width="21" height="20" viewBox="0 0 21 20" fill="none" stroke="#fff" strokeWidth="1.300">
              <path d="M1 1h19v15h-6.500l-3 3-3-3H1z" />
            </NotifySvg>
          </TrayItem>
          <ShowDesktop />
        </Tray>
      </Taskbar>
    </Screen>
  );
}
